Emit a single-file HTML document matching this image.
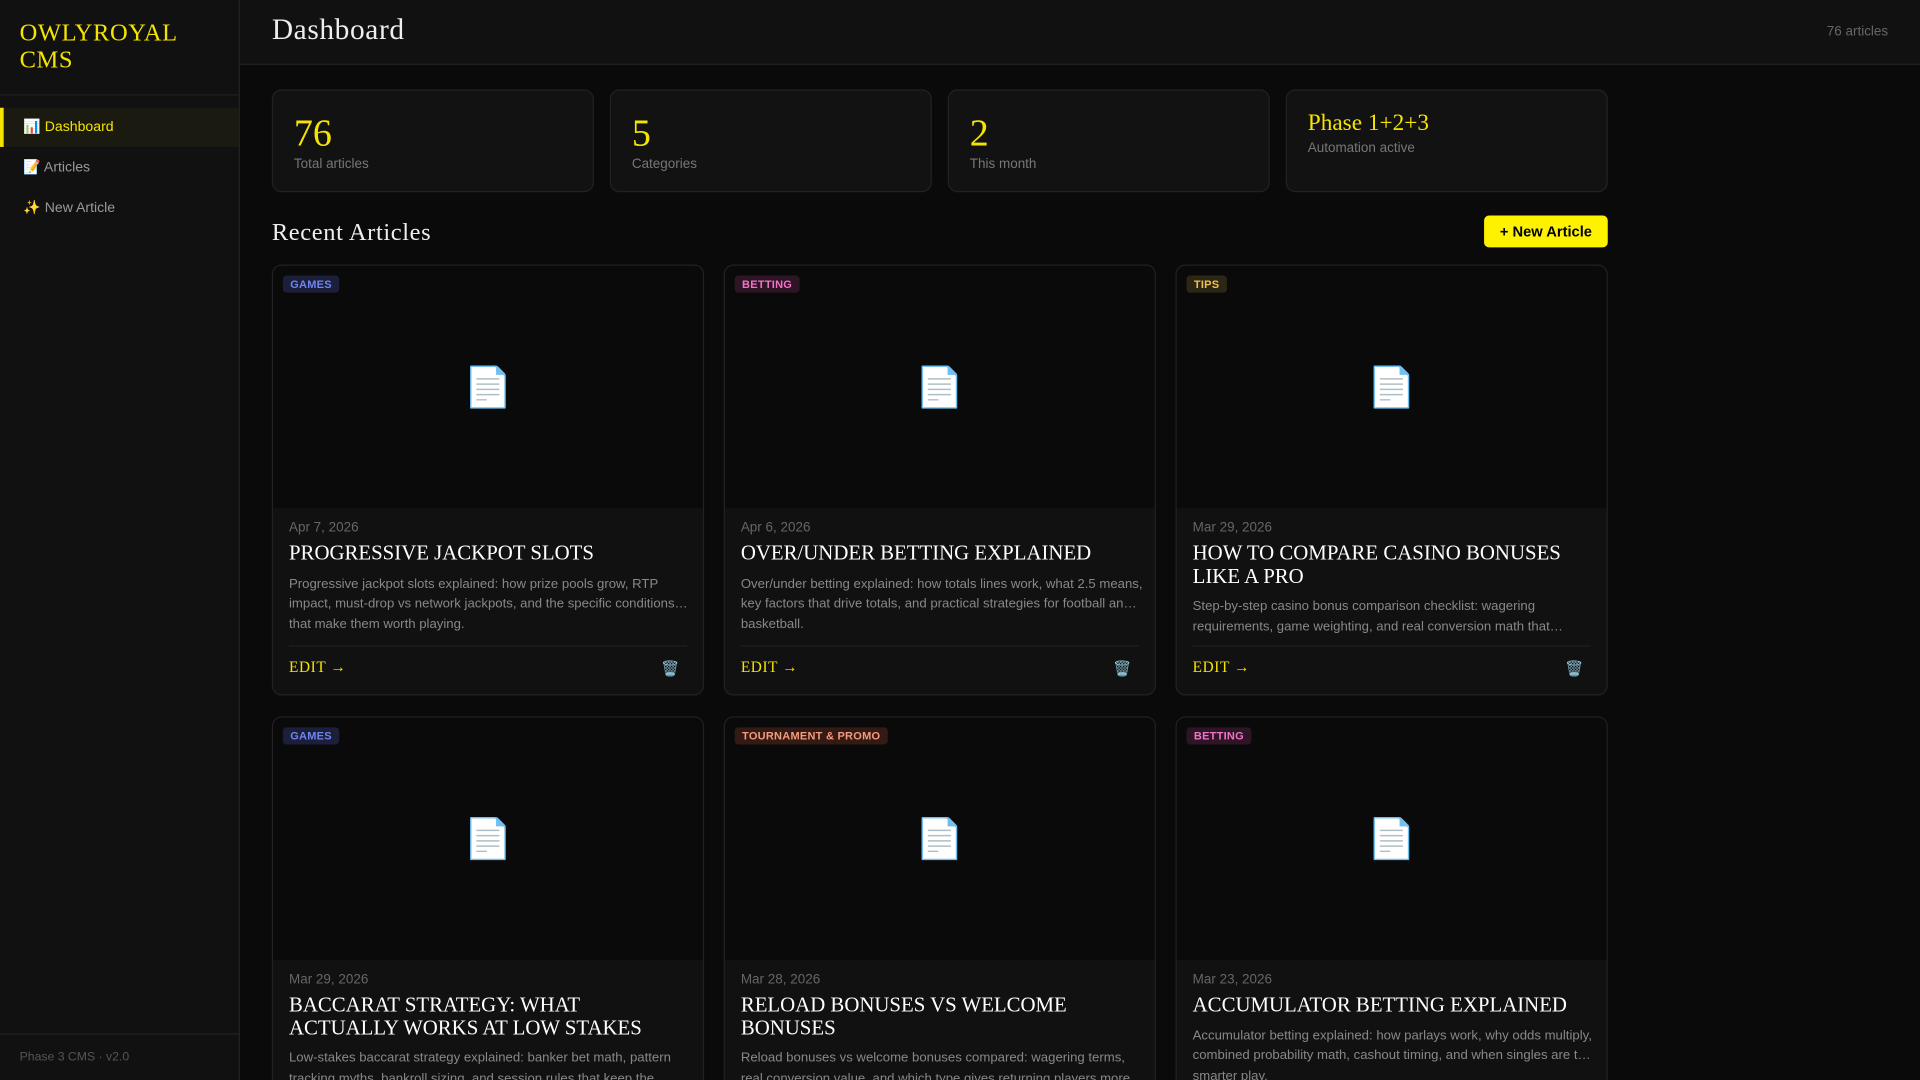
<!DOCTYPE html>
<html><head><meta charset="utf-8"><style>
html,body{margin:0;padding:0;background:#0a0a0a;overflow:hidden;width:1920px;height:1080px}
#s{position:absolute;left:0;top:0;width:1568px;height:882px;transform:scale(1.22449);transform-origin:0 0;font-family:"Liberation Sans",sans-serif;overflow:hidden}
.side{position:absolute;left:0;top:0;width:195px;height:882px;background:#111;border-right:1px solid #222}
.logo{font-family:"Liberation Serif",serif;color:#f5e400;font-size:20px;line-height:22px;padding:16px 16px 16px;letter-spacing:.5px;height:45px;border-bottom:1px solid #222}
.nav{margin-top:10px}
.nav div{height:32px;line-height:32px;padding-left:19px;font-size:11.5px;color:#999;margin-bottom:1px}
.nav .a{background:#1a1a10;color:#f5e400;border-left:3px solid #f5e400;padding-left:16px}
.sfoot{position:absolute;bottom:0;left:0;right:0;height:38px;border-top:1px solid #222;font-size:10px;color:#555;padding:13px 16px 0;box-sizing:border-box}
.hdr{position:absolute;left:196px;top:0;right:0;height:52px;background:#111;border-bottom:1px solid #222}
.hdr h1{margin:0;position:absolute;left:26px;top:12px;font-family:"Liberation Serif",serif;font-weight:normal;font-size:24px;color:#eee;letter-spacing:.5px}
.hdr span{position:absolute;right:26px;top:20px;font-size:11px;color:#666}
.stat{position:absolute;top:73px;width:261px;height:82px;background:#121212;border:1px solid #222;border-radius:8px}
.stat b{position:absolute;left:17px;top:17px;font-family:"Liberation Serif",serif;font-weight:normal;font-size:31px;color:#f5e400}
.stat i{position:absolute;left:17px;top:54px;font-style:normal;font-size:11px;color:#777}
.stat.p b{font-size:19px;top:16px}.stat.p i{top:41px}
.rh{position:absolute;left:222px;top:179px;font-family:"Liberation Serif",serif;font-size:20px;color:#eee;letter-spacing:.5px}
.btn{position:absolute;left:1212px;top:176px;width:101px;height:26px;background:#fff200;border-radius:4px;color:#000;font-weight:bold;font-size:12px;text-align:center;line-height:26px}
.card{position:absolute;width:351px;height:350px;border:1px solid #222;border-radius:8px;background:#111;overflow:hidden}
.img{height:198px;background:#0a0a0a;position:relative}
.img .ic{position:absolute;left:50%;top:50%;transform:translate(-50%,-50%);font-size:32px;font-family:"Noto Color Emoji","DejaVu Sans",sans-serif}
.tag{position:absolute;left:8px;top:8px;font-size:9px;font-weight:bold;padding:2px 6px;border-radius:3px;letter-spacing:.2px}
.g{background:#1c1f3a;color:#6f85f0}.bt{background:#2e1526;color:#f472c6}.t{background:#2c2614;color:#f3c24e}.tp{background:#331a14;color:#f59a7c}
.bd{padding:10px 13px 0}
.dt{font-size:11px;color:#666;height:14px}
.tt{font-family:"Liberation Serif",serif;font-size:17px;line-height:18.5px;color:#fff;margin-top:4px;text-transform:uppercase}
.ds{font-size:10.75px;line-height:16.5px;color:#888;margin-top:7px}
.ds div{white-space:nowrap}
.ft{position:absolute;left:13px;right:13px;bottom:0;height:39px;border-top:1px solid #1f1f1f}
.ft .e{position:absolute;left:0;top:10px;font-family:"Liberation Serif",serif;color:#f5e400;font-size:12.5px;letter-spacing:.5px}
.ft .d{position:absolute;right:6px;top:11px;font-size:12px}
</style></head><body><div id="s">
<div class="side">
<div class="logo">OWLYROYAL<br>CMS</div>
<div class="nav"><div class="a">📊 Dashboard</div><div>📝 Articles</div><div>✨ New Article</div></div>
<div class="sfoot">Phase 3 CMS · v2.0</div>
</div>
<div class="hdr"><h1>Dashboard</h1><span>76 articles</span></div>
<div class="stat" style="left:222px"><b>76</b><i>Total articles</i></div>
<div class="stat" style="left:498px"><b>5</b><i>Categories</i></div>
<div class="stat" style="left:774px"><b>2</b><i>This month</i></div>
<div class="stat p" style="left:1050px"><b>Phase 1+2+3</b><i>Automation active</i></div>
<div class="rh">Recent Articles</div>
<div class="btn">+ New Article</div>

<div class="card" style="left:222px;top:216px"><div class="img"><span class="tag g">GAMES</span><span class="ic">📄</span></div><div class="bd"><div class="dt">Apr 7, 2026</div><div class="tt">Progressive Jackpot Slots</div><div class="ds"><div>Progressive jackpot slots explained: how prize pools grow, RTP</div><div>impact, must-drop vs network jackpots, and the specific conditions…</div><div>that make them worth playing.</div></div></div><div class="ft"><span class="e">EDIT →</span><span class="d">🗑️</span></div></div>
<div class="card" style="left:591px;top:216px"><div class="img"><span class="tag bt">BETTING</span><span class="ic">📄</span></div><div class="bd"><div class="dt">Apr 6, 2026</div><div class="tt">Over/Under Betting Explained</div><div class="ds"><div>Over/under betting explained: how totals lines work, what 2.5 means,</div><div>key factors that drive totals, and practical strategies for football an…</div><div>basketball.</div></div></div><div class="ft"><span class="e">EDIT →</span><span class="d">🗑️</span></div></div>
<div class="card" style="left:960px;top:216px"><div class="img"><span class="tag t">TIPS</span><span class="ic">📄</span></div><div class="bd"><div class="dt">Mar 29, 2026</div><div class="tt">How to Compare Casino Bonuses Like a Pro</div><div class="ds"><div>Step-by-step casino bonus comparison checklist: wagering</div><div>requirements, game weighting, and real conversion math that…</div></div></div><div class="ft"><span class="e">EDIT →</span><span class="d">🗑️</span></div></div>

<div class="card" style="left:222px;top:585px"><div class="img"><span class="tag g">GAMES</span><span class="ic">📄</span></div><div class="bd"><div class="dt">Mar 29, 2026</div><div class="tt">Baccarat Strategy: What Actually Works at Low Stakes</div><div class="ds"><div>Low-stakes baccarat strategy explained: banker bet math, pattern</div><div>tracking myths, bankroll sizing, and session rules that keep the…</div></div></div></div>
<div class="card" style="left:591px;top:585px"><div class="img"><span class="tag tp">TOURNAMENT &amp; PROMO</span><span class="ic">📄</span></div><div class="bd"><div class="dt">Mar 28, 2026</div><div class="tt">Reload Bonuses vs Welcome Bonuses</div><div class="ds"><div>Reload bonuses vs welcome bonuses compared: wagering terms,</div><div>real conversion value, and which type gives returning players more…</div></div></div></div>
<div class="card" style="left:960px;top:585px"><div class="img"><span class="tag bt">BETTING</span><span class="ic">📄</span></div><div class="bd"><div class="dt">Mar 23, 2026</div><div class="tt">Accumulator Betting Explained</div><div class="ds"><div>Accumulator betting explained: how parlays work, why odds multiply,</div><div>combined probability math, cashout timing, and when singles are t…</div><div>smarter play.</div></div></div></div>
</div></body></html>
